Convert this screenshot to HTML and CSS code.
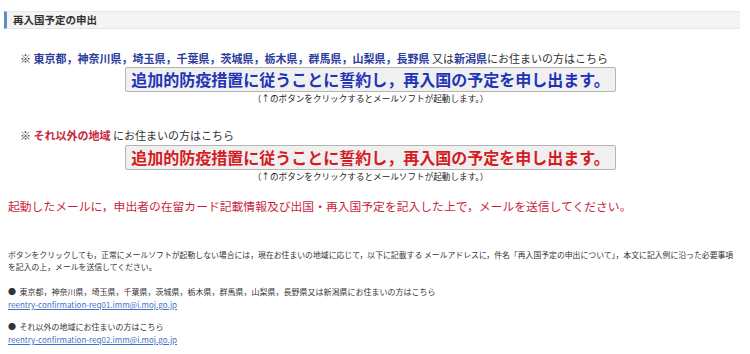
FILE: index.html
```html
<!doctype html>
<html lang="ja">
<head>
    <meta charset="UTF-8">
    <title>再入国予定の申出</title>
    <link rel="stylesheet" href="styles.css">
</head>
<body>
<h2 class="page-title">再入国予定の申出</h2>

<div class="apply">
    <p class="apply__area">※ <span class="apply__place apply__place--blue">東京都，神奈川県，埼玉県，千葉県，茨城県，栃木県，群馬県，山梨県，長野県</span> 又は<span class="apply__place apply__place--blue">新潟県</span>にお住まいの方はこちら</p>
    <div class="apply__row">
        <button class="apply__btn apply__btn--blue" type="button">追加的防疫措置に従うことに誓約し，再入国の予定を申し出ます。</button>
    </div>
    <p class="apply__note">（↑のボタンをクリックするとメールソフトが起動します。）</p>

    <p class="apply__area apply__area--second">※ <span class="apply__place apply__place--red">それ以外の地域</span> にお住まいの方はこちら</p>
    <div class="apply__row">
        <button class="apply__btn apply__btn--red" type="button">追加的防疫措置に従うことに誓約し，再入国の予定を申し出ます。</button>
    </div>
    <p class="apply__note">（↑のボタンをクリックするとメールソフトが起動します。）</p>

    <p class="apply__warning">起動したメールに，申出者の在留カード記載情報及び出国・再入国予定を記入した上で，メールを送信してください。</p>
</div>

<div class="fallback">
    <p class="fallback__text">ボタンをクリックしても，正常にメールソフトが起動しない場合には，現在お住まいの地域に応じて，以下に記載する メールアドレスに，件名「再入国予定の申出について」，本文に記入例に沿った必要事項<br>を記入の上，メールを送信してください。</p>
    <ul class="fallback__list">
        <li class="fallback__item">
            ●&nbsp; 東京都，神奈川県，埼玉県，千葉県，茨城県，栃木県，群馬県，山梨県，長野県又は新潟県にお住まいの方はこちら<br>
            <a href="#">reentry-confirmation-req01.imm@i.moj.go.jp</a>
        </li>
        <li class="fallback__item">
            ●&nbsp; それ以外の地域にお住まいの方はこちら<br>
            <a href="#">reentry-confirmation-req02.imm@i.moj.go.jp</a>
        </li>
    </ul>
</div>
</body>
</html>
```

FILE: styles.css
```css
body {
    margin: 0;
    width: 750px;
    background: #fff;
    color: #222;
    font-family: "Noto Sans CJK JP", "Noto Sans", sans-serif;
}

p {
    margin: 0;
}

.page-title {
    margin: 11px 10px 0 4px;
    padding-left: 6px;
    height: 16px;
    line-height: 16px;
    font-size: 10.5px;
    font-weight: bold;
    color: #333;
    background: #f4f4f4;
    border-top: 1px solid #e6e6e6;
    border-bottom: 1px solid #e6e6e6;
    border-left: 3px solid #5f8fbf;
}

.apply {
    margin-right: 9px;
}

.apply__area {
    margin-top: 22px;
    padding-left: 20px;
    font-size: 11px;
    line-height: 14px;
    color: #333;
}

.apply__area--second {
    margin-top: 24px;
}

.apply__place {
    font-weight: 600;
}

.apply__place--blue {
    color: #2c3d9c;
}

.apply__place--red {
    color: #c8283c;
}

.apply__row {
    margin-top: 2px;
    text-align: center;
}

.apply__area--second + .apply__row {
    margin-top: 3px;
}

.apply__btn {
    height: 25px;
    padding: 0 5px;
    font-family: "Noto Sans CJK JP", sans-serif;
    font-size: 16px;
    font-weight: bold;
    line-height: 23px;
    background: #f0f0f0;
    border: 1px solid #b4b4b4;
    border-radius: 2px;
}

.apply__btn--blue {
    color: #1f35b8;
}

.apply__btn--red {
    color: #d41c24;
}

.apply__note {
    text-align: center;
    font-size: 8.6px;
    line-height: 12px;
    color: #222;
}

.apply__warning {
    margin-top: 16px;
    padding-left: 8px;
    font-size: 11.8px;
    line-height: 16px;
    color: #c81e3c;
}

.fallback {
    margin: 35px 4px 0 8px;
    font-size: 7.85px;
    color: #333;
}

.fallback__text {
    line-height: 12px;
}

.fallback__list {
    list-style: none;
    margin: 12px 0 0;
    padding: 0;
}

.fallback__item {
    font-size: 8px;
    line-height: 13px;
    margin-bottom: 9px;
}

.fallback__item a {
    color: #3f72c8;
}
```
